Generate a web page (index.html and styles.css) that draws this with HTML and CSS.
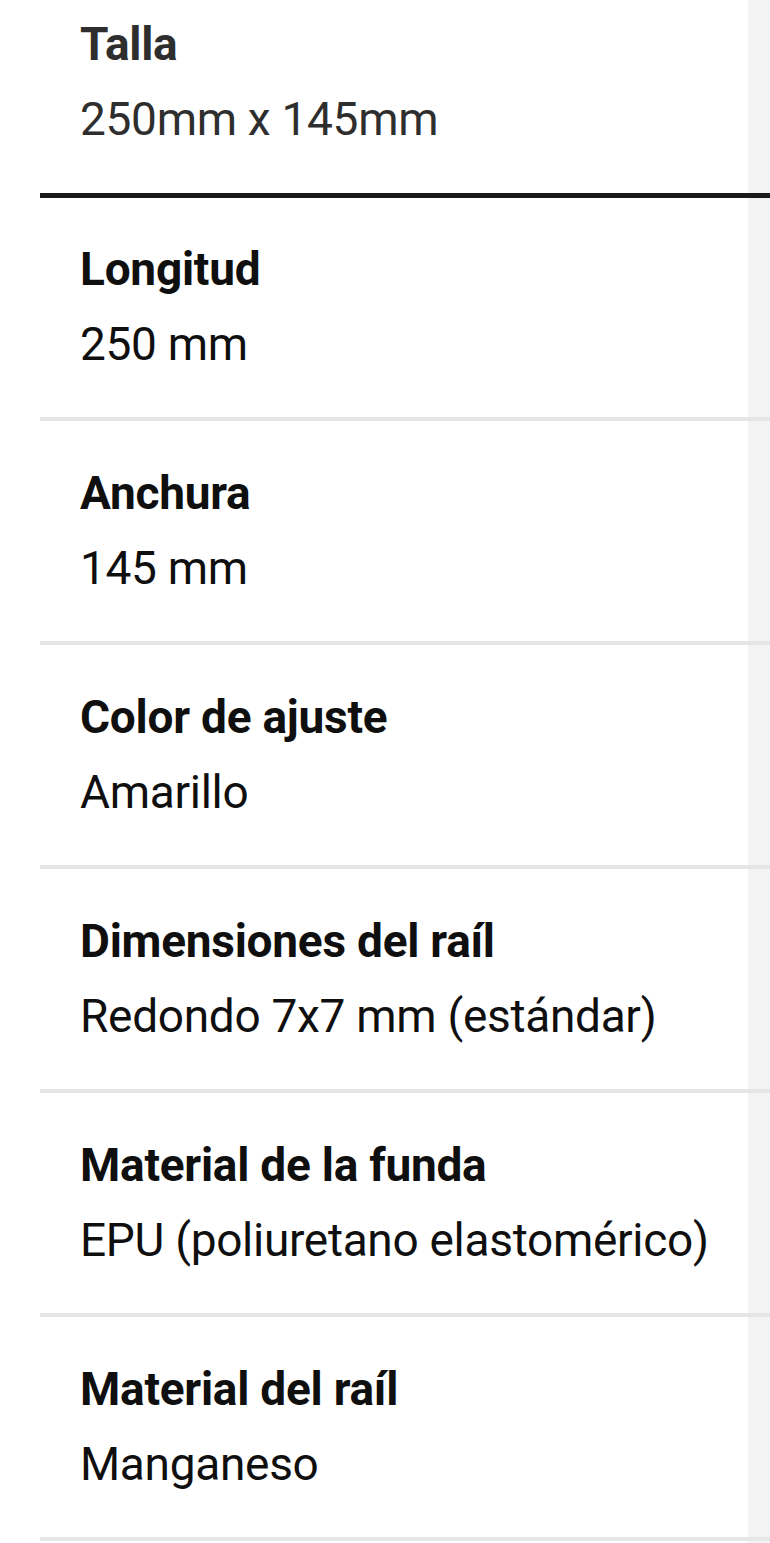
FILE: index.html
```html
<!DOCTYPE html>
<html lang="es">
<head>
    <meta charset="UTF-8">
    <meta name="viewport" content="width=device-width, initial-scale=1.0">
    <title>Especificaciones</title>
    <link rel="stylesheet" href="styles.css">
</head>
<body>
    <div class="spec-list">
        <div class="spec-row spec-row--head">
            <div class="spec-label">Talla</div>
            <div class="spec-value">250mm x 145mm</div>
        </div>
        <div class="spec-row">
            <div class="spec-label">Longitud</div>
            <div class="spec-value">250 mm</div>
        </div>
        <div class="spec-row">
            <div class="spec-label">Anchura</div>
            <div class="spec-value">145 mm</div>
        </div>
        <div class="spec-row">
            <div class="spec-label">Color de ajuste</div>
            <div class="spec-value">Amarillo</div>
        </div>
        <div class="spec-row">
            <div class="spec-label">Dimensiones del raíl</div>
            <div class="spec-value">Redondo 7x7 mm (estándar)</div>
        </div>
        <div class="spec-row">
            <div class="spec-label">Material de la funda</div>
            <div class="spec-value">EPU (poliuretano elastomérico)</div>
        </div>
        <div class="spec-row">
            <div class="spec-label">Material del raíl</div>
            <div class="spec-value">Manganeso</div>
        </div>
        <div class="spec-row spec-row--end"></div>
    </div>
</body>
</html>
```

FILE: styles.css
```css
* {
    margin: 0;
    padding: 0;
    box-sizing: border-box;
}

body {
    font-family: 'Roboto', 'Liberation Sans', Arial, sans-serif;
    background-color: #ffffff;
    color: #0f0f0f;
    overflow: hidden;
}

/* right grey strip sits behind the list, separators run over it */
.spec-list {
    margin-top: -28px;
    min-height: 1600px;
    background: linear-gradient(to right, #ffffff 748px, #f3f3f3 748px);
}

.spec-row {
    margin-left: 40px;
    padding: 35px 0 35px 40px;
    border-top: 4px solid #e6e6e6;
}

.spec-row--head {
    border-top: none;
    padding-bottom: 36px;
    color: #2e2e2e;
}

.spec-row--head + .spec-row {
    border-top: 5px solid #1a1a1a;
    padding-top: 34px;
}

.spec-row--end {
    padding: 0;
}

.spec-label {
    font-size: 46px;
    font-weight: 700;
    line-height: 75px;
    letter-spacing: -0.25px;
}

.spec-value {
    font-size: 46px;
    font-weight: 400;
    line-height: 75px;
    letter-spacing: -0.3px;
}
```
